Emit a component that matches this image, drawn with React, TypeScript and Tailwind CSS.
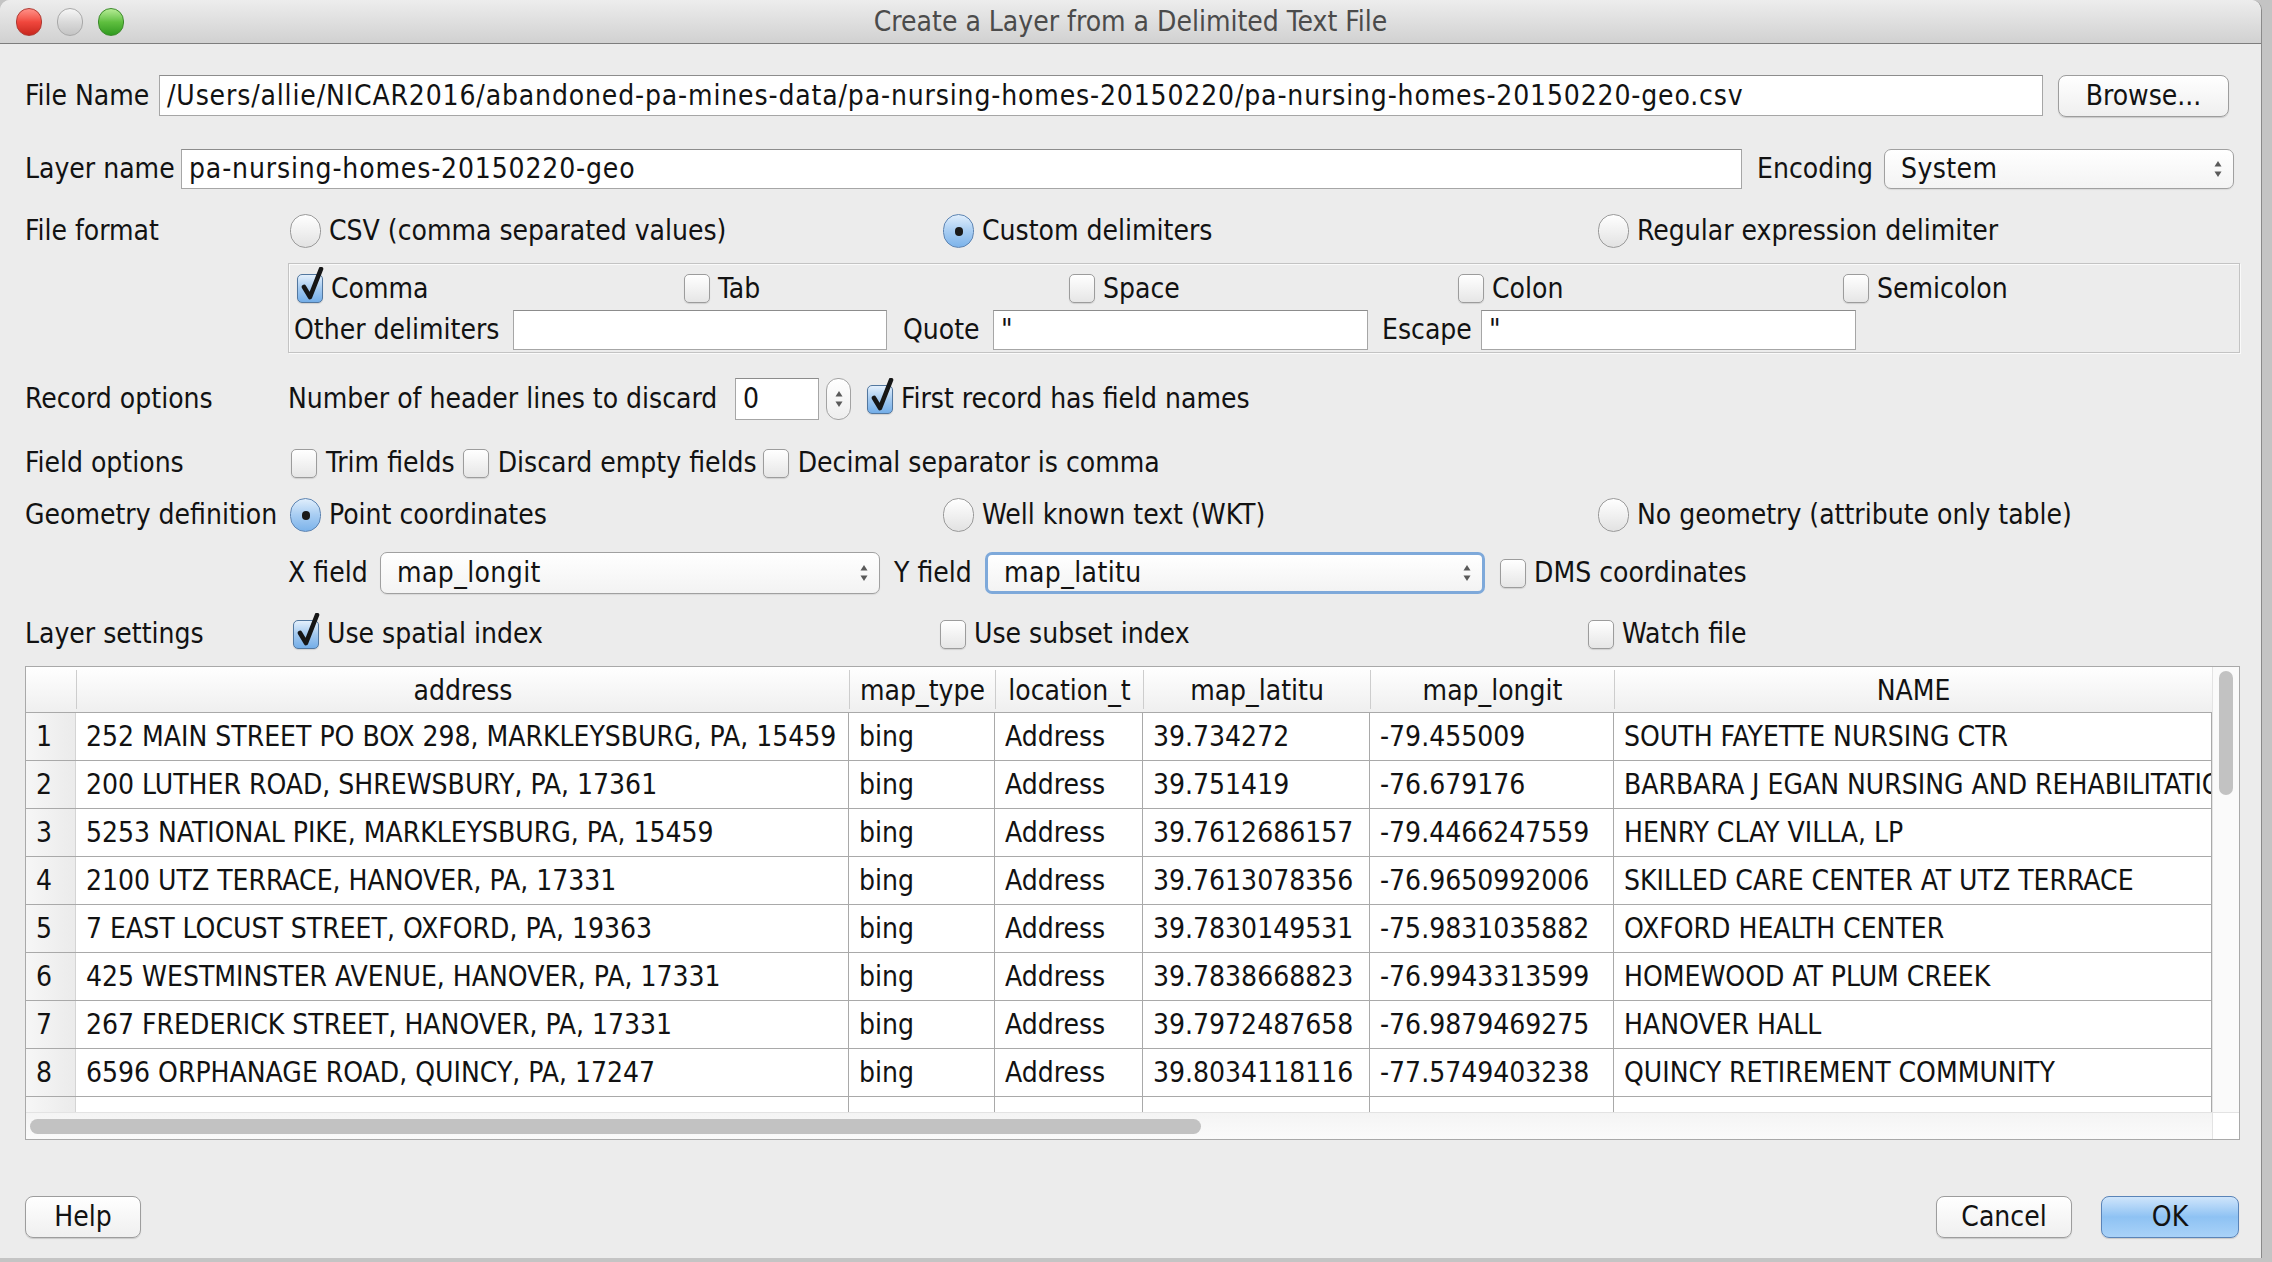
import React from 'react'

const rows = [
  ['252 MAIN STREET PO BOX 298, MARKLEYSBURG, PA, 15459', 'bing', 'Address', '39.734272', '-79.455009', 'SOUTH FAYETTE NURSING CTR'],
  ['200 LUTHER ROAD, SHREWSBURY, PA, 17361', 'bing', 'Address', '39.751419', '-76.679176', 'BARBARA J EGAN NURSING AND REHABILITATION CENTER'],
  ['5253 NATIONAL PIKE, MARKLEYSBURG, PA, 15459', 'bing', 'Address', '39.7612686157', '-79.4466247559', 'HENRY CLAY VILLA, LP'],
  ['2100 UTZ TERRACE, HANOVER, PA, 17331', 'bing', 'Address', '39.7613078356', '-76.9650992006', 'SKILLED CARE CENTER AT UTZ TERRACE'],
  ['7 EAST LOCUST STREET, OXFORD, PA, 19363', 'bing', 'Address', '39.7830149531', '-75.9831035882', 'OXFORD HEALTH CENTER'],
  ['425 WESTMINSTER AVENUE, HANOVER, PA, 17331', 'bing', 'Address', '39.7838668823', '-76.9943313599', 'HOMEWOOD AT PLUM CREEK'],
  ['267 FREDERICK STREET, HANOVER, PA, 17331', 'bing', 'Address', '39.7972487658', '-76.9879469275', 'HANOVER HALL'],
  ['6596 ORPHANAGE ROAD, QUINCY, PA, 17247', 'bing', 'Address', '39.8034118116', '-77.5749403238', 'QUINCY RETIREMENT COMMUNITY'],
  ['', '', '', '', '', ''],
]

const headers = ['address', 'map_type', 'location_t', 'map_latitu', 'map_longit', 'NAME']
const colW = ['w-[773px]', 'w-[146px]', 'w-[148px]', 'w-[227px]', 'w-[244px]', 'w-[598px]']

function Check({ checked }: { checked?: boolean }) {
  return (
    <span
      className={`relative inline-block w-[26px] h-[29px] shrink-0 rounded-[5px] border shadow-[0_1px_1px_rgba(0,0,0,0.12)] ${
        checked
          ? 'border-[#52779f] bg-linear-to-b from-[#e4f0fc] via-[#a3c9ef] to-[#74aee8]'
          : 'border-[#9c9c9c] bg-linear-to-b from-white to-[#e6e6e6]'
      }`}
    >
      {checked && (
        <svg className="absolute left-[2px] -top-[8px]" width="24" height="34" viewBox="0 0 24 34">
          <path d="M4 20 L10 30 L21 2" fill="none" stroke="#161616" strokeWidth="4.6" strokeLinejoin="round" strokeLinecap="round" />
        </svg>
      )}
    </span>
  )
}

function Radio({ checked }: { checked?: boolean }) {
  return (
    <span
      className={`inline-flex items-center justify-center w-[31px] h-[34px] shrink-0 rounded-full border ${
        checked
          ? 'border-[#5d84b2] bg-linear-to-b from-[#e0eefc] via-[#a8cdf2] to-[#7cb3ea]'
          : 'border-[#9a9a9a] bg-linear-to-b from-white to-[#e2e2e2]'
      }`}
    >
      {checked && <span className="w-[8px] h-[9px] rounded-full bg-[#1a1a1a]" />}
    </span>
  )
}

function Arrows() {
  return (
    <svg width="10" height="22" viewBox="0 0 10 22">
      <path d="M5 3 L8.5 8.5 L1.5 8.5Z" fill="#5a5a5a" />
      <path d="M5 19 L8.5 13.5 L1.5 13.5Z" fill="#5a5a5a" />
    </svg>
  )
}

function Combo({ value, width, focus }: { value: string; width: string; focus?: boolean }) {
  return (
    <div
      className={`${width} h-full shrink-0 flex items-center justify-between rounded-[7px] bg-linear-to-b from-white to-[#f3f3f3] pl-[16px] pr-[10px] ${
        focus ? 'border-[3px] border-[#7ea9da]' : 'border border-[#a0a0a0] shadow-[0_1px_1px_rgba(0,0,0,0.08)]'
      }`}
    >
      <span className="tracking-[0.4px]">{value}</span>
      <Arrows />
    </div>
  )
}

function Field({ value, width }: { value?: string; width: string }) {
  return (
    <div className={`${width} h-full shrink-0 flex items-center bg-white border border-[#a6a6a6] border-t-[#8c8c8c] px-[7px] tracking-[0.85px] whitespace-nowrap overflow-hidden`}>
      {value}
    </div>
  )
}

function Button({ label, width, primary }: { label: string; width: string; primary?: boolean }) {
  return (
    <div
      className={`${width} h-[42px] shrink-0 flex items-center justify-center rounded-[8px] border shadow-[0_1px_1px_rgba(0,0,0,0.15)] ${
        primary
          ? 'border-[#5a84b8] bg-linear-to-b from-[#cfe5fb] via-[#8ec2f3] to-[#a9d2f8]'
          : 'border-[#9d9d9d] bg-linear-to-b from-white to-[#efefef]'
      }`}
    >
      {label}
    </div>
  )
}

function Opt({ children, width, radio, checked }: { children: React.ReactNode; width: string; radio?: boolean; checked?: boolean }) {
  return (
    <div className={`${width} shrink-0 flex items-center`}>
      {radio ? <Radio checked={checked} /> : <Check checked={checked} />}
      <span className="ml-[8px] whitespace-nowrap">{children}</span>
    </div>
  )
}

export default function App() {
  return (
    <div className="w-[2272px] h-[1262px] bg-[#c4c4c4] overflow-hidden text-[#121212] font-['DejaVu_Sans_Condensed','DejaVu_Sans',sans-serif] font-stretch-condensed">
      <div className="w-[2262px] h-[1258px] bg-[#ececec] rounded-t-[10px] overflow-hidden flex flex-col border-r border-[#8a8a8a]">
        {/* title bar */}
        <div className="relative h-[44px] shrink-0 flex items-center justify-center bg-linear-to-b from-[#ededed] to-[#d1d1d1] border-b border-[#7d7d7d]">
          <div className="absolute left-[16px] top-[8px] flex gap-[15px]">
            <span className="w-[26px] h-[28px] rounded-full border border-[#b03a32] bg-linear-to-b from-[#ff8f87] via-[#f0473d] to-[#c8261d]" />
            <span className="w-[26px] h-[28px] rounded-full border border-[#a8a8a8] bg-linear-to-b from-[#f7f7f7] via-[#dadada] to-[#c4c4c4]" />
            <span className="w-[26px] h-[28px] rounded-full border border-[#3b8a2a] bg-linear-to-b from-[#b5ec94] via-[#5fbf3f] to-[#2f9a1f]" />
          </div>
          <span className="text-[28px] text-[#4b4b4b]">Create a Layer from a Delimited Text File</span>
        </div>

        <div className="pl-[25px] pr-[22px] text-[28px] leading-none flex flex-col flex-1">
          {/* File name */}
          <div className="mt-[31px] h-[41px] flex items-center">
            <span className="w-[134px] shrink-0">File Name</span>
            <Field width="w-[1884px]" value="/Users/allie/NICAR2016/abandoned-pa-mines-data/pa-nursing-homes-20150220/pa-nursing-homes-20150220-geo.csv" />
            <div className="ml-[15px]">
              <Button label="Browse..." width="w-[171px]" />
            </div>
          </div>

          {/* Layer name */}
          <div className="mt-[33px] h-[40px] flex items-center">
            <span className="w-[156px] shrink-0">Layer name</span>
            <Field width="w-[1561px]" value="pa-nursing-homes-20150220-geo" />
            <span className="ml-[15px] w-[127px] shrink-0">Encoding</span>
            <Combo value="System" width="w-[350px]" />
          </div>

          {/* File format */}
          <div className="mt-[22px] h-[40px] flex items-center">
            <span className="w-[265px] shrink-0">File format</span>
            <Opt width="w-[653px]" radio>CSV (comma separated values)</Opt>
            <Opt width="w-[655px]" radio checked>Custom delimiters</Opt>
            <Opt width="w-[600px]" radio>Regular expression delimiter</Opt>
          </div>

          {/* delimiter group */}
          <div className="mt-[12px] ml-[263px] w-[1952px] h-[90px] shrink-0 border border-[#c3c3c3] shadow-[inset_1px_1px_0_#fafafa,1px_1px_0_#fafafa] flex flex-col">
            <div className="mt-[10px] h-[29px] pl-[8px] flex items-center">
              <Opt width="w-[387px]" checked>Comma</Opt>
              <Opt width="w-[385px]">Tab</Opt>
              <Opt width="w-[389px]">Space</Opt>
              <Opt width="w-[385px]">Colon</Opt>
              <Opt width="w-[300px]">Semicolon</Opt>
            </div>
            <div className="mt-[7px] h-[40px] pl-[5px] flex items-center">
              <span className="w-[219px] shrink-0">Other delimiters</span>
              <Field width="w-[374px]" />
              <span className="ml-[16px] w-[90px] shrink-0">Quote</span>
              <Field width="w-[375px]" value={'"'} />
              <span className="ml-[14px] w-[99px] shrink-0">Escape</span>
              <Field width="w-[375px]" value={'"'} />
            </div>
          </div>

          {/* Record options */}
          <div className="mt-[25px] h-[42px] flex items-center">
            <span className="w-[263px] shrink-0">Record options</span>
            <span className="w-[447px] shrink-0">Number of header lines to discard</span>
            <Field width="w-[84px]" value="0" />
            <div className="ml-[7px] w-[25px] h-[42px] shrink-0 rounded-[12px] border border-[#a3a3a3] bg-linear-to-b from-white to-[#eeeeee] flex items-center justify-center">
              <Arrows />
            </div>
            <div className="ml-[16px]">
              <Opt width="w-[400px]" checked>First record has field names</Opt>
            </div>
          </div>

          {/* Field options */}
          <div className="mt-[23px] h-[40px] flex items-center">
            <span className="w-[266px] shrink-0">Field options</span>
            <Check />
            <span className="ml-[9px] mr-[8px]">Trim fields</span>
            <Check />
            <span className="ml-[9px] mr-[6px]">Discard empty fields</span>
            <Check />
            <span className="ml-[9px]">Decimal separator is comma</span>
          </div>

          {/* Geometry */}
          <div className="mt-[12px] h-[40px] flex items-center">
            <span className="w-[265px] shrink-0">Geometry definition</span>
            <Opt width="w-[653px]" radio checked>Point coordinates</Opt>
            <Opt width="w-[655px]" radio>Well known text (WKT)</Opt>
            <Opt width="w-[600px]" radio>No geometry (attribute only table)</Opt>
          </div>

          {/* X / Y field */}
          <div className="mt-[17px] h-[42px] flex items-center">
            <span className="ml-[263px] w-[92px] shrink-0">X field</span>
            <Combo value="map_longit" width="w-[500px]" />
            <span className="ml-[14px] w-[91px] shrink-0">Y field</span>
            <Combo value="map_latitu" width="w-[500px]" focus />
            <div className="ml-[15px]">
              <Opt width="w-[300px]">DMS coordinates</Opt>
            </div>
          </div>

          {/* Layer settings */}
          <div className="mt-[20px] h-[40px] flex items-center">
            <span className="w-[268px] shrink-0">Layer settings</span>
            <Opt width="w-[647px]" checked>Use spatial index</Opt>
            <Opt width="w-[648px]">Use subset index</Opt>
            <Opt width="w-[300px]">Watch file</Opt>
          </div>

          {/* table */}
          <div className="mt-[12px] w-[2215px] h-[474px] shrink-0 border border-[#a9a9a9] bg-white flex flex-col">
            <div className="flex flex-1 min-h-0">
              <div className="w-[2186px] overflow-hidden flex flex-col">
                <div className="h-[46px] shrink-0 flex bg-linear-to-b from-white to-[#efefef] border-b border-[#a9a9a9]">
                  <div className="w-[50px] shrink-0" />
                  {headers.map((h, i) => (
                    <div key={h} className={`${colW[i]} shrink-0 flex items-center justify-center pt-[2px] border-l border-[#cdcdcd] my-[3px]`}>
                      {h}
                    </div>
                  ))}
                </div>
                {rows.map((r, ri) => (
                  <div key={ri} className="h-[48px] shrink-0 flex border-b border-[#a9a9a9]">
                    <div className="w-[50px] shrink-0 flex items-center pl-[10px] bg-linear-to-r from-[#f6f6f6] to-[#ebebeb] border-r border-[#d4d4d4]">
                      {r[0] ? ri + 1 : ''}
                    </div>
                    {r.map((c, ci) => (
                      <div key={ci} className={`${colW[ci]} shrink-0 flex items-center pl-[10px] whitespace-nowrap overflow-hidden border-r border-[#a9a9a9]`}>
                        {c}
                      </div>
                    ))}
                  </div>
                ))}
              </div>
              <div className="w-[27px] shrink-0 bg-[#fafafa] border-l border-[#e3e3e3] pt-[4px] flex justify-center">
                <div className="w-[14px] h-[124px] rounded-full bg-[#c2c2c2]" />
              </div>
            </div>
            <div className="h-[27px] shrink-0 flex border-t border-[#e3e3e3]">
              <div className="flex-1 bg-linear-to-b from-[#f4f4f4] to-[#fbfbfb] flex items-center pl-[4px]">
                <div className="w-[1171px] h-[15px] rounded-full bg-[#c2c2c2]" />
              </div>
              <div className="w-[27px] bg-white border-l border-[#e3e3e3]" />
            </div>
          </div>

          {/* buttons */}
          <div className="mt-[56px] h-[42px] flex items-center">
            <Button label="Help" width="w-[116px]" />
            <div className="ml-auto flex items-center">
              <Button label="Cancel" width="w-[136px]" />
              <div className="ml-[29px]">
                <Button label="OK" width="w-[138px]" primary />
              </div>
            </div>
          </div>
        </div>
      </div>
    </div>
  )
}
